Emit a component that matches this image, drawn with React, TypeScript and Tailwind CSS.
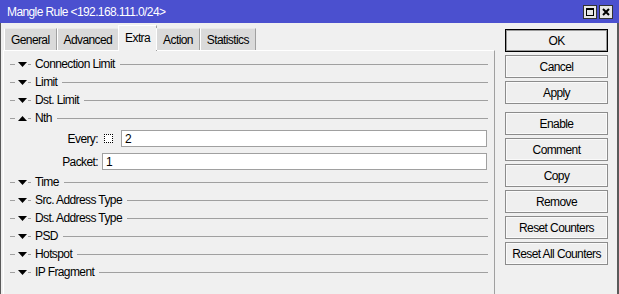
import React from "react";

type Section = { label: string; open?: boolean };

const before: Section[] = [
  { label: "Connection Limit" },
  { label: "Limit" },
  { label: "Dst. Limit" },
  { label: "Nth", open: true },
];

const after: Section[] = [
  { label: "Time" },
  { label: "Src. Address Type" },
  { label: "Dst. Address Type" },
  { label: "PSD" },
  { label: "Hotspot" },
  { label: "IP Fragment" },
];

const tabs = ["General", "Advanced", "Extra", "Action", "Statistics"];

const buttonsTop = ["OK", "Cancel", "Apply"];
const buttonsBottom = ["Enable", "Comment", "Copy", "Remove", "Reset Counters", "Reset All Counters"];

function Arrow({ open }: { open?: boolean }) {
  return (
    <svg width="9" height="5" viewBox="0 0 9 5" className="ml-[3px] shrink-0">
      {open ? <polygon points="0,5 9,5 4.5,0" fill="#000" /> : <polygon points="0,0 9,0 4.5,5" fill="#000" />}
    </svg>
  );
}

function SectionRow({ label, open }: Section) {
  return (
    <div className="flex h-[18px] items-center">
      <div className="ml-[6px] h-px w-[5px] bg-[#a0a0a0]" />
      <Arrow open={open} />
      <div className="ml-[1px] h-px w-[3px] bg-[#a0a0a0]" />
      <span className="ml-[4px] whitespace-nowrap">{label}</span>
      <div className="ml-[5px] mr-[6px] h-px flex-1 bg-[#a0a0a0]" />
    </div>
  );
}

function Btn({ label, main }: { label: string; main?: boolean }) {
  return (
    <div
      className={
        main
          ? "flex h-[23px] items-center justify-center border border-black bg-[#efefef] shadow-[inset_0_0_0_1px_#9a9a9a]"
          : "flex h-[23px] items-center justify-center border border-[#8c8c8c] bg-[#efefef] shadow-[inset_0_0_0_1px_#fafafa]"
      }
    >
      {label}
    </div>
  );
}

export default function App() {
  return (
    <div className="flex h-[294px] w-[619px] flex-col overflow-hidden bg-[#f0f0f0] font-['Liberation_Sans',Arial,sans-serif] text-[12px] tracking-[-0.6px] text-black">
      {/* title bar */}
      <div className="flex h-[23px] shrink-0 items-center bg-[#4b50cf] pl-[7px] pr-[6px]">
        <span className="flex-1 text-white">Mangle Rule &lt;192.168.111.0/24&gt;</span>
        <div className="flex gap-[2px]">
          <div className="flex h-[14px] w-[14px] items-center justify-center border border-[#333] bg-[#e6e6e6]">
            <div className="h-[8px] w-[8px] border border-t-2 border-black" />
          </div>
          <div className="flex h-[14px] w-[14px] items-center justify-center border border-[#333] bg-[#e6e6e6]">
            <svg width="8" height="8" viewBox="0 0 8 8">
              <path d="M1 1L7 7M7 1L1 7" stroke="#000" strokeWidth="2" />
            </svg>
          </div>
        </div>
      </div>

      <div className="flex flex-1 border-l border-r-2 border-[#5a5a5a]">
        {/* left side: tabs + panel */}
        <div className="ml-[2px] flex w-[492px] flex-col">
          <div className="relative z-10 ml-[1px] flex h-[27px] items-end">
            {tabs.map((t) =>
              t === "Extra" ? (
                <div
                  key={t}
                  className="-mx-[1px] -mb-px flex h-[26px] items-center border-l border-r border-t border-l-white border-r-[#a0a0a0] border-t-white bg-[#f0f0f0] px-[6px] pb-[2px]"
                >
                  {t}
                </div>
              ) : (
                <div
                  key={t}
                  className="flex h-[22px] items-center border-l border-r border-t border-l-white border-r-[#a0a0a0] border-t-[#e8e8e8] bg-[#dadada] px-[6px] pt-[1px]"
                >
                  {t}
                </div>
              )
            )}
          </div>
          <div className="flex-1 border-l border-r border-t border-l-white border-r-[#a0a0a0] border-t-white pt-[4px]">
            {before.map((s) => (
              <SectionRow key={s.label} {...s} />
            ))}
            <div className="mt-[3px] flex h-[17px] items-center">
              <span className="w-[94px] text-right">Every:</span>
              <div className="ml-[6px] h-[9px] w-[9px] border border-dotted border-black bg-white" />
              <div className="ml-[8px] mr-[7px] flex h-[17px] flex-1 items-center border border-[#a0a0a0] bg-white pl-[3px]">
                2
              </div>
            </div>
            <div className="mt-[6px] flex h-[17px] items-center">
              <span className="w-[94px] text-right">Packet:</span>
              <div className="ml-[4px] mr-[7px] flex h-[17px] flex-1 items-center border border-[#a0a0a0] bg-white pl-[3px]">
                1
              </div>
            </div>
            <div className="mt-[3px]">
              {after.map((s) => (
                <SectionRow key={s.label} {...s} />
              ))}
            </div>
          </div>
        </div>

        {/* right side: buttons */}
        <div className="ml-[10px] flex w-[103px] flex-col pt-[6px]">
          <div className="flex flex-col gap-[3px]">
            {buttonsTop.map((b) => (
              <Btn key={b} label={b} main={b === "OK"} />
            ))}
          </div>
          <div className="mt-[8px] flex flex-col gap-[3px]">
            {buttonsBottom.map((b) => (
              <Btn key={b} label={b} />
            ))}
          </div>
        </div>
      </div>
    </div>
  );
}
